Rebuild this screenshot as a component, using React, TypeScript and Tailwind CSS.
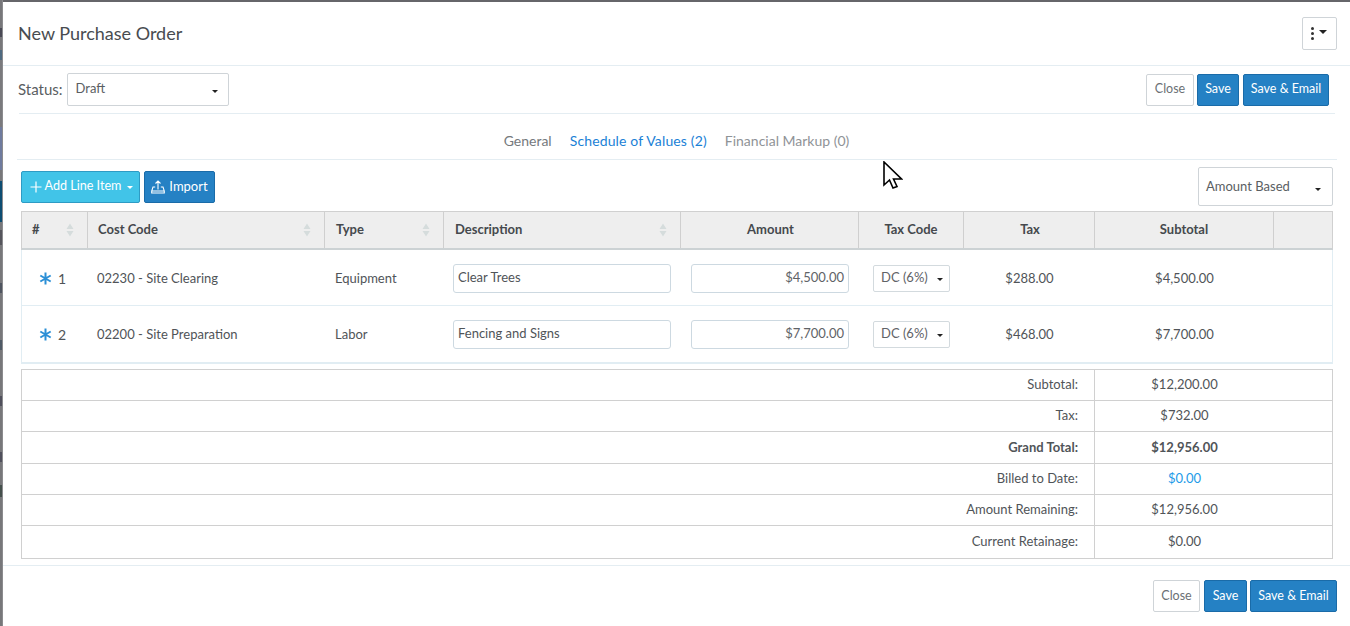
const lato = "font-['Lato','Open_Sans',sans-serif]";

const Caret = ({ className = "" }: { className?: string }) => (
  <span className={`inline-block w-0 h-0 border-x-[3px] border-x-transparent border-t-[3px] border-t-[#222] ${className}`} />
);

const Sort = () => (
  <svg width="8" height="14" viewBox="0 0 8 14" className="shrink-0">
    <path d="M4 0.5 L7.5 6 L0.5 6 Z M4 13.5 L7.5 8 L0.5 8 Z" fill="#d5dcdc" />
  </svg>
);

const Btn = ({ children, primary, className = "" }: { children: React.ReactNode; primary?: boolean; className?: string }) => (
  <div
    className={`h-8 flex items-center justify-center rounded-[2px] border text-[12.5px] ${primary ? "bg-[#2581c4] border-[#1a6ba8] text-white" : "bg-white border-[#cfd4d8] text-[#6b7075]"} ${className}`}
  >
    {children}
  </div>
);

const Actions = ({ footer }: { footer?: boolean }) => (
  <div className="flex items-center">
    <Btn className={footer ? "w-[47px] mr-[4px]" : "w-[48px] mr-[3px]"}>Close</Btn>
    <Btn primary className={footer ? "w-[43px] mr-[3px]" : "w-[42px] mr-[4px]"}>Save</Btn>
    <Btn primary className={footer ? "w-[87px]" : "w-[86px]"}>Save &amp; Email</Btn>
  </div>
);

const strip: [number, string][] = [
  [28, "#77777a"], [9, "#4a4a55"], [13, "#77777a"], [10, "#4f6a80"], [67, "#7a7a7d"], [43, "#6f7b9e"], [11, "#77777a"],
  [41, "#0d4d72"], [8, "#77777a"], [15, "#55555c"], [38, "#77777a"], [10, "#4f5560"], [47, "#77777a"],
  [10, "#4f5a66"], [46, "#77777a"], [10, "#50505c"], [46, "#77777a"], [10, "#50505c"], [23, "#77777a"], [12, "#45504c"],
  [129, "#77777a"],
];

const headers: [string, string, boolean, string][] = [
  ["#", "w-[66px]", true, "pl-[10px]"],
  ["Cost Code", "w-[237px]", true, "pl-[10px]"],
  ["Type", "w-[119px]", true, "pl-[11px]"],
  ["Description", "w-[237px]", true, "pl-[11px]"],
  ["Amount", "w-[178px]", false, "pl-[2px]"],
  ["Tax Code", "w-[105px]", false, ""],
  ["Tax", "w-[131px]", false, "pl-[2px]"],
  ["Subtotal", "w-[179px]", false, ""],
  ["", "", false, ""],
];

const rows = [
  { n: 1, code: "02230 - Site Clearing", type: "Equipment", desc: "Clear Trees", amount: "$4,500.00", tax: "$288.00", sub: "$4,500.00" },
  { n: 2, code: "02200 - Site Preparation", type: "Labor", desc: "Fencing and Signs", amount: "$7,700.00", tax: "$468.00", sub: "$7,700.00" },
];

const totals: { label: string; value: string; bold?: boolean; link?: boolean; h: string }[] = [
  { label: "Subtotal:", value: "$12,200.00", h: "h-[31px]" },
  { label: "Tax:", value: "$732.00", h: "h-[31px]" },
  { label: "Grand Total:", value: "$12,956.00", bold: true, h: "h-[32px]" },
  { label: "Billed to Date:", value: "$0.00", link: true, h: "h-[31px]" },
  { label: "Amount Remaining:", value: "$12,956.00", h: "h-[31px]" },
  { label: "Current Retainage:", value: "$0.00", h: "h-[32px]" },
];

export default function App() {
  return (
    <div className={`${lato} relative w-[1350px] h-[626px] overflow-hidden bg-white text-[13px] text-[#505458] flex`}>
      <div className="w-[3px] shrink-0 flex flex-col border-r border-[#8b8b8e]">
        {strip.map(([h, c], i) => (
          <div key={i} className="w-full shrink-0" style={{ height: h, backgroundColor: c }} />
        ))}
      </div>
      <div className="flex-1 min-w-0 flex flex-col">
        <div className="h-[2px] bg-[#66666a] shrink-0" />
        <header className="h-[64px] shrink-0 border-b border-[#e4edf2] pl-[15px] pr-[13px] flex items-center justify-between">
          <h1 className="text-[18px] text-[#484c50] font-normal">New Purchase Order</h1>
          <div className="w-[35px] h-[33px] border border-[#cfd4d8] rounded-[2px] flex items-center justify-center gap-[5px] pr-[2px]">
            <span className="flex flex-col gap-[2px]">
              <span className="w-[3px] h-[3px] rounded-full bg-[#333]" />
              <span className="w-[3px] h-[3px] rounded-full bg-[#333]" />
              <span className="w-[3px] h-[3px] rounded-full bg-[#333]" />
            </span>
            <Caret className="border-x-[4px] border-t-[4px] mb-[4px]" />
          </div>
        </header>

        <div className="h-[48px] shrink-0 ml-[16px] mr-[15px] border-b border-[#e4edf2] flex items-center justify-between pr-[6px]">
          <div className="flex items-center gap-[4px]">
            <span className="text-[15px] text-[#5a5e62] -ml-[1px]">Status:</span>
            <div className="w-[162px] h-[33px] border border-[#cfd4d8] rounded-[2px] flex items-center justify-between pl-[8px] pr-[10px] text-[#5a5e62]">
              <span className="-mt-[1px]">Draft</span>
              <Caret className="mt-[3px]" />
            </div>
          </div>
          <Actions />
        </div>

        <nav className="h-[46px] shrink-0 ml-[14px] mr-[13px] border-b border-[#e4edf2] flex items-center justify-center gap-[18px] text-[14px] pr-[1px] pt-[8px]">
          <span className="text-[#75797d]">General</span>
          <span className="text-[#1a81d6] tracking-[0.14px]">Schedule of Values (2)</span>
          <span className="text-[#8f9397]">Financial Markup (0)</span>
        </nav>

        <div className="ml-[18px] mr-[17px] flex-1 flex flex-col min-h-0">
          <div className="h-[51px] shrink-0 flex items-start justify-between">
            <div className="flex items-center gap-[4px] mt-[11px]">
              <div className="w-[119px] h-8 flex items-center justify-center gap-[3px] rounded-[2px] border border-[#2e9bc4] bg-[#41c4e8] text-white text-[12.6px] pl-[2px]">
                <svg width="12" height="12" viewBox="0 0 12 12" fill="none" stroke="#fff" strokeWidth="1.2"><path d="M6 0.5V11.5M0.5 6H11.5" /></svg>
                <span className="-mt-[1px]">Add Line Item</span>
                <Caret className="border-t-white ml-[3px]" />
              </div>
              <div className="w-[71px] h-8 flex items-center justify-center gap-[4px] rounded-[2px] border border-[#1a6ba8] bg-[#2581c4] text-white text-[13px]">
                <svg width="14" height="14" viewBox="0 0 14 14" fill="none" stroke="#fff" strokeWidth="1.1"><path d="M7 9.5V1M4.5 3.5L7 1L9.5 3.5M4.2 7H2L0.7 11V13H13.3V11L12 7H9.8M0.7 11H13.3" /></svg>
                <span className="-mt-[1px]">Import</span>
              </div>
            </div>
            <div className="w-[135px] h-[39px] mt-[7px] border border-[#cfd4d8] rounded-[2px] flex items-center justify-between pl-[7px] pr-[11px] text-[#5a5e62]">
              <span>Amount Based</span>
              <Caret className="mt-[5px]" />
            </div>
          </div>

          <div className="w-[1312px] shrink-0">
            <div className="flex h-[39px] border border-b-2 border-[#d0d0d0] border-b-[#ccd2d4] bg-[#eeeeee] font-bold text-[#45494d]">
              {headers.map(([h, w, sortable, pad], i) => (
                <div
                  key={i}
                  className={`${w || "flex-1"} ${pad} ${i < headers.length - 1 ? "border-r border-[#cfcfcf]" : ""} flex items-center ${sortable ? "justify-between pr-[13px]" : "justify-center"}`}
                >
                  <span>{h}</span>
                  {sortable && <Sort />}
                </div>
              ))}
            </div>
            <div className="border-x border-b-2 border-[#e1edf3]">
              {rows.map((r, i) => (
                <div key={r.n} className={`flex items-center h-[56px] ${i === 0 ? "border-b border-[#e1edf3] pt-[1px]" : ""}`}>
                  <div className="w-[66px] flex items-center pl-[17px] gap-[6px] text-[14px]">
                    <svg width="13" height="13" viewBox="0 0 13 13" fill="none" stroke="#2b8fd6" strokeWidth="2"><path d="M6.5 0.5V12.5M1.3 3.5L11.7 9.5M11.7 3.5L1.3 9.5" /></svg>
                    <span>{r.n}</span>
                  </div>
                  <div className="w-[237px] pl-[9px] pt-[1px]">{r.code}</div>
                  <div className="w-[119px] pl-[10px] pt-[1px]">{r.type}</div>
                  <div className="w-[237px] pl-[9px]">
                    <div className="w-[218px] h-[29px] border border-[#cdd9e1] rounded-[3px] pl-[4px] flex items-center">{r.desc}</div>
                  </div>
                  <div className="w-[178px] pl-[10px]">
                    <div className="w-[158px] h-[29px] border border-[#cdd9e1] rounded-[3px] pr-[4px] flex items-center justify-end text-[#5f6367]">{r.amount}</div>
                  </div>
                  <div className="w-[105px] pl-[14px]">
                    <div className="w-[77px] h-[27px] border border-[#d3dade] rounded-[2px] pl-[7px] pr-[6px] flex items-center justify-between text-[#5f6367]">
                      <span>DC (6%)</span>
                      <Caret className="mt-[3px]" />
                    </div>
                  </div>
                  <div className="w-[131px] text-center pt-[1px]">{r.tax}</div>
                  <div className="w-[179px] text-center pt-[1px]">{r.sub}</div>
                </div>
              ))}
            </div>

            <div className="mt-[5px] border border-[#d0d0d0]">
              {totals.map((t, i) => (
                <div key={t.label} className={`flex ${t.h} ${i < totals.length - 1 ? "border-b border-[#d0d0d0]" : "h-[31px]"} ${t.bold ? "font-bold" : ""}`}>
                  <div className="w-[1073px] border-r border-[#d0d0d0] flex items-center justify-end pr-[16px]">{t.label}</div>
                  <div className={`w-[179px] flex items-center justify-center ${t.link ? "text-[#1e9be8]" : ""}`}>{t.value}</div>
                </div>
              ))}
            </div>
          </div>
        </div>

        <footer className="h-[61px] shrink-0 border-t border-[#e4edf2] flex items-start justify-end pt-[14px] pr-[13px]">
          <Actions footer />
        </footer>
      </div>

      <svg className="absolute left-[883px] top-[161px]" width="20" height="29" viewBox="0 0 20 29">
        <path d="M1 1 V24 L6.5 19 L10 27 L14 25.5 L10.5 18 H18.5 Z" fill="#fff" stroke="#000" strokeWidth="1.6" strokeLinejoin="miter" />
      </svg>
    </div>
  );
}
